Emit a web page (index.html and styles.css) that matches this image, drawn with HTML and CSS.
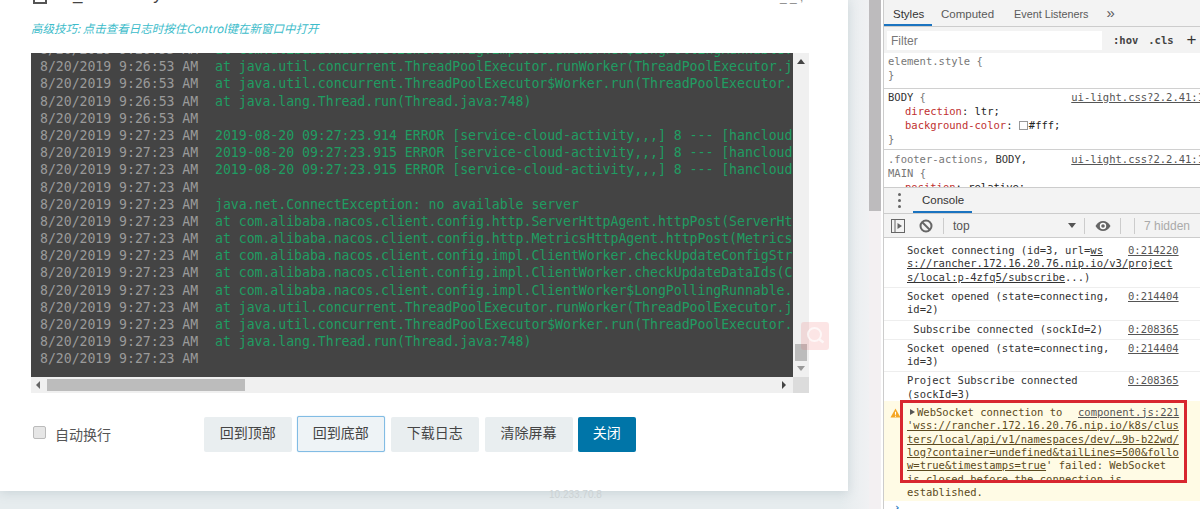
FILE: index.html
```html
<!DOCTYPE html>
<html lang="zh">
<head>
<meta charset="utf-8">
<title>Logs</title>
<link rel="stylesheet" href="styles.css">
</head>
<body>
<main class="app">
  <section class="modal">
    <div class="modal-title"><span class="title-box"></span><span class="title-text">W_               y</span><span class="title-right">_ _ ,</span></div>
    <p class="hint">高级技巧: 点击查看日志时按住Control键在新窗口中打开</p>
    <div class="log-frame">
      <div class="log-row">
        <div class="log-view">
          <div class="log-lines">
            <div class="line"><span class="ts">8/20/2019 9:26:53 AM</span><span class="msg">at com.alibaba.nacos.client.config.impl.ClientWorker$LongPollingRunnable.run(ClientWorker.java:412)</span></div>
            <div class="line"><span class="ts">8/20/2019 9:26:53 AM</span><span class="msg">at java.util.concurrent.ThreadPoolExecutor.runWorker(ThreadPoolExecutor.java:1149)</span></div>
            <div class="line"><span class="ts">8/20/2019 9:26:53 AM</span><span class="msg">at java.util.concurrent.ThreadPoolExecutor$Worker.run(ThreadPoolExecutor.java:624)</span></div>
            <div class="line"><span class="ts">8/20/2019 9:26:53 AM</span><span class="msg">at java.lang.Thread.run(Thread.java:748)</span></div>
            <div class="line"><span class="ts">8/20/2019 9:26:53 AM</span></div>
            <div class="line"><span class="ts">8/20/2019 9:27:23 AM</span><span class="msg">2019-08-20 09:27:23.914 ERROR [service-cloud-activity,,,] 8 --- [hancloud.nacos]</span></div>
            <div class="line"><span class="ts">8/20/2019 9:27:23 AM</span><span class="msg">2019-08-20 09:27:23.915 ERROR [service-cloud-activity,,,] 8 --- [hancloud.nacos]</span></div>
            <div class="line"><span class="ts">8/20/2019 9:27:23 AM</span><span class="msg">2019-08-20 09:27:23.915 ERROR [service-cloud-activity,,,] 8 --- [hancloud.nacos]</span></div>
            <div class="line"><span class="ts">8/20/2019 9:27:23 AM</span></div>
            <div class="line"><span class="ts">8/20/2019 9:27:23 AM</span><span class="msg">java.net.ConnectException: no available server</span></div>
            <div class="line"><span class="ts">8/20/2019 9:27:23 AM</span><span class="msg">at com.alibaba.nacos.client.config.http.ServerHttpAgent.httpPost(ServerHttpAgent.java:1)</span></div>
            <div class="line"><span class="ts">8/20/2019 9:27:23 AM</span><span class="msg">at com.alibaba.nacos.client.config.http.MetricsHttpAgent.httpPost(MetricsHttpAgent.java:1)</span></div>
            <div class="line"><span class="ts">8/20/2019 9:27:23 AM</span><span class="msg">at com.alibaba.nacos.client.config.impl.ClientWorker.checkUpdateConfigStr(ClientWorker)</span></div>
            <div class="line"><span class="ts">8/20/2019 9:27:23 AM</span><span class="msg">at com.alibaba.nacos.client.config.impl.ClientWorker.checkUpdateDataIds(ClientWorker)</span></div>
            <div class="line"><span class="ts">8/20/2019 9:27:23 AM</span><span class="msg">at com.alibaba.nacos.client.config.impl.ClientWorker$LongPollingRunnable.run(Client)</span></div>
            <div class="line"><span class="ts">8/20/2019 9:27:23 AM</span><span class="msg">at java.util.concurrent.ThreadPoolExecutor.runWorker(ThreadPoolExecutor.java:1149)</span></div>
            <div class="line"><span class="ts">8/20/2019 9:27:23 AM</span><span class="msg">at java.util.concurrent.ThreadPoolExecutor$Worker.run(ThreadPoolExecutor.java:624)</span></div>
            <div class="line"><span class="ts">8/20/2019 9:27:23 AM</span><span class="msg">at java.lang.Thread.run(Thread.java:748)</span></div>
            <div class="line"><span class="ts">8/20/2019 9:27:23 AM</span></div>
          </div>
        </div>
        <div class="vbar">
          <span class="arrow up"></span>
          <span class="vthumb"></span>
          <span class="arrow down"></span>
        </div>
      </div>
      <div class="hbar">
        <span class="arrow left"></span>
        <div class="htrack"><span class="hthumb"></span></div>
        <span class="arrow right"></span>
        <span class="corner"></span>
      </div>
    </div>
    <div class="actions">
      <label class="wrap"><span class="check"></span>自动换行</label>
      <div class="buttons">
        <button class="btn b-top">回到顶部</button>
        <button class="btn b-bottom">回到底部</button>
        <button class="btn b-down">下载日志</button>
        <button class="btn b-clear">清除屏幕</button>
        <button class="btn primary">关闭</button>
      </div>
    </div>
  </section>
  <div class="float-search">
    <svg viewBox="0 0 28 28" width="28" height="28"><circle cx="13.500" cy="12.500" r="6.500" fill="none" stroke="#fff" stroke-opacity=".7" stroke-width="2"/><path d="M18.500 17.500l4 3" stroke="#fff" stroke-opacity=".7" stroke-width="2.500" fill="none"/></svg>
  </div>
  <div class="footnote">10.233.70.8</div>
</main>
<div class="page-scroll"><span class="page-scroll-thumb"></span></div>
<aside class="devtools">
  <div class="tabs">
    <span class="tab active">Styles</span><span class="tab computed">Computed</span><span class="tab listeners">Event Listeners</span><span class="tab more">»</span>
  </div>
  <div class="filter">
    <span class="filter-input">Filter</span>
    <span class="filter-btn">:hov</span><span class="filter-btn">.cls</span><span class="filter-plus">+</span>
  </div>
  <div class="rules">
    <div class="rule first">
      <div class="dim">element.style {</div>
      <div class="dim">}</div>
    </div>
    <div class="rule">
      <div class="sel"><span>BODY <i class="dim">{</i></span><a class="src">ui-light.css?2.2.41:1</a></div>
      <div class="decl"><b>direction</b>: ltr;</div>
      <div class="decl"><b>background-color</b>: <span class="swatch"></span>#fff;</div>
      <div class="dim">}</div>
    </div>
    <div class="rule last">
      <div class="sel"><span><i class="dim">.footer-actions,</i> BODY,<br><i class="dim">MAIN</i> <i class="dim">{</i></span><a class="src">ui-light.css?2.2.41:1</a></div>
      <div class="decl"><b>position</b>: relative;</div>
    </div>
  </div>
  <div class="drawer-tabs">
    <span class="dots"><i></i><i></i><i></i></span>
    <span class="console-tab">Console</span>
  </div>
  <div class="console-bar">
    <svg class="ic-panel" viewBox="0 0 16 16" width="16" height="16"><rect x="1.500" y="1.500" width="13" height="13" fill="none" stroke="#666"/><path d="M5 2v12" stroke="#666"/><path d="M7.500 5l4.500 3-4.500 3z" fill="#666"/></svg>
    <svg class="ic-clear" viewBox="0 0 16 16" width="16" height="16"><circle cx="8" cy="8" r="5.500" fill="none" stroke="#666" stroke-width="2"/><path d="M4 4l8 8" stroke="#666" stroke-width="2"/></svg>
    <span class="sep s1"></span>
    <span class="ctx">top</span>
    <span class="caret"></span>
    <span class="sep s2"></span>
    <svg class="eye" viewBox="0 0 16 12" width="16" height="12"><path d="M.5 6c2-3.500 4.500-5 7.500-5s5.500 1.500 7.500 5c-2 3.500-4.500 5-7.500 5s-5.500-1.500-7.500-5z" fill="#666"/><circle cx="8" cy="6" r="3.200" fill="#fff"/><circle cx="8" cy="6" r="1.800" fill="#666"/></svg>
    <span class="sep s3"></span>
    <span class="sep s4"></span>
    <span class="hidden-count">7 hidden</span>
  </div>
  <div class="console">
    <div class="msg-row"><span class="src-link">0:214220</span>Socket connecting (id=3, url=<u>ws</u><br><u>s://rancher.172.16.20.76.nip.io/v3/project</u><br><u>s/local:p-4zfq5/subscribe</u>...)</div>
    <div class="msg-row"><span class="src-link">0:214404</span>Socket opened (state=connecting,<br>id=2)</div>
    <div class="msg-row"><span class="src-link">0:208365</span>&nbsp;Subscribe connected (sockId=2)</div>
    <div class="msg-row"><span class="src-link">0:214404</span>Socket opened (state=connecting,<br>id=3)</div>
    <div class="msg-row tight"><span class="src-link">0:208365</span>Project Subscribe connected<br>(sockId=3)</div>
    <div class="warn-row">
      <svg class="warn-icon" viewBox="0 0 12 11" width="11" height="10"><path d="M6 .5l5.500 10H.5z" fill="#f5a623"/><path d="M6 4v3.500M6 8.500v1" stroke="#fff" stroke-width="1.200"/></svg>
      <span class="warn-src">component.js:221</span><span class="tri"></span>WebSocket connection to<br>
      <u>'wss://rancher.172.16.20.76.nip.io/k8s/clus</u><br>
      <u>ters/local/api/v1/namespaces/dev/…9b-b22wd/</u><br>
      <u>log?container=undefined&amp;tailLines=500&amp;follo</u><br>
      <u>w=true&amp;timestamps=true</u>' failed: WebSocket<br>
      is closed before the connection is<br>
      established.
      <span class="highlight"></span>
    </div>
    <div class="prompt">›</div>
  </div>
</aside>
</body>
</html>
```
FILE: styles.css
```css
* { box-sizing: border-box; }
html, body { margin: 0; height: 100%; overflow: hidden; }
body { display: flex; width: 1200px; height: 509px; background: #fff; font-family: "Liberation Sans", "Noto Sans CJK SC", sans-serif; }
.app { position: relative; width: 869px; height: 509px; background: linear-gradient(90deg, #e6ecee 0, #e6ecee 840px, #f0f1f3 869px); overflow: hidden; flex: none; }
.modal { width: 848px; height: 491px; background: #fff; padding: 0 0 0 31px; box-shadow: 0 2px 10px rgba(120,140,150,.25); overflow: hidden; }
.modal-title { height: 4px; display: flex; align-items: flex-end; position: relative; font-size: 17px; color: #444; }
.title-box { width: 14px; height: 11px; border: 2px solid #555; margin-left: 2px; flex: none; }
.title-text { position: absolute; left: 26px; bottom: 2px; line-height: 14px; white-space: pre; }
.title-right { position: absolute; left: 749px; bottom: 2px; line-height: 10px; font-size: 12px; color: #888; }
.hint { margin: 17px 0 0; height: 14px; line-height: 14px; font-size: 11.500px; font-style: italic; color: #3cbcca; font-family: "Noto Sans CJK SC", "Liberation Sans", sans-serif; }
.log-frame { margin-top: 18px; width: 778px; height: 340px; background: #f0f0f0; }
.log-row { display: flex; height: 324px; }
.log-view { width: 762px; height: 324px; background: #444444; overflow: hidden; }
.log-lines { margin-top: -12px; padding-left: 9px; }
.line { height: 17.200px; line-height: 17.200px; font-family: "DejaVu Sans Mono", monospace; font-size: 13.200px; white-space: pre; display: flex; }
.ts { color: #9a9a9a; width: 175px; flex: none; letter-spacing: -.03px; }
.msg { color: #1f9d62; letter-spacing: -.03px; }
.vbar { width: 16px; position: relative; background: #f0f0f0; }
.arrow { position: absolute; width: 0; height: 0; border: 4px solid transparent; }
.arrow.up { border-top: 0; border-bottom: 5px solid #444; left: 4px; top: 6px; }
.arrow.down { border-bottom: 0; border-top: 5px solid #999; left: 4px; top: 313px; }
.vthumb { position: absolute; left: 2px; top: 291px; width: 12px; height: 17px; background: #bcbcbc; }
.hbar { display: flex; height: 16px; position: relative; background: #f0f0f0; }
.arrow.left { border-left: 0; border-right: 4px solid #666; left: 5px; top: 4px; }
.htrack { margin-left: 16px; width: 730px; padding-top: 2px; }
.hthumb { display: block; width: 198px; height: 12px; background: #bcbcbc; }
.arrow.right { position: static; border-right: 0; border-left: 4px solid #444; align-self: center; margin-left: 5px; margin-right: 7px; }
.corner { width: 16px; height: 16px; background: #dcdcdc; margin-left: auto; }
.actions { display: flex; margin-top: 23px; height: 36px; align-items: center; }
.wrap { display: flex; align-items: center; font-size: 14px; color: #555; width: 173px; padding-left: 2px; height: 36px; padding-bottom: 1px; flex: none; }
.check { width: 13px; height: 13px; border: 1px solid #bbb; background: #e6e6e6; border-radius: 2px; margin-right: 9px; margin-top: -3px; }
.buttons { display: flex; align-items: center; }
.btn { height: 35px; border: 0; background: #e9eef0; color: #444; font-size: 14px; font-family: "Noto Sans CJK SC", sans-serif; border-radius: 2px; padding: 0 0 4px; flex: none; }
.b-top { width: 87.500px; }
.b-bottom { width: 88.500px; height: 36px; margin-left: 5px; border: 1px solid #82bce4; box-shadow: 0 0 1px #82bce4; background: #eef3f6; }
.b-down { width: 87.500px; margin-left: 6px; }
.b-clear { width: 88px; margin-left: 6px; }
.primary { background: #0075a8; color: #fff; width: 58.500px; margin-left: 5px; }
.float-search { position: absolute; left: 801px; top: 322px; width: 28px; height: 28px; background: rgba(240,100,100,.17); border-radius: 3px; }
.float-search svg { display: block; }
.footnote { position: absolute; left: 549px; top: 489px; font-size: 10px; color: #ccd2d4; }
.page-scroll { width: 12px; height: 509px; background: #f3f0f2; flex: none; position: relative; }
.page-scroll-thumb { position: absolute; left: 0; top: 0; width: 12px; height: 211px; background: #bdbbbd; }
.devtools { margin-left: 2px; height: 509px; background: #fff; border-left: 1px solid #ccc; font-family: "DejaVu Sans Mono", monospace; font-size: 10.500px; color: #333; display: flex; flex-direction: column; overflow: hidden; flex: 1; min-width: 0; }
.tabs { height: 27px; background: #f3f3f3; border-bottom: 1px solid #ccc; display: flex; font-family: "Liberation Sans", sans-serif; font-size: 11.500px; color: #5a5a5a; align-items: flex-start; flex: none; }
.tab { padding: 8px 9px 0; height: 26px; white-space: nowrap; }
.tab.active { color: #333; border-bottom: 2px solid #1a73c0; width: 48px; }
.tab.computed { margin-right: 2px; }
.tab.listeners { font-size: 10.800px; }
.tab.more { font-size: 15px; padding-top: 4px; }
.filter { height: 26px; background: #f3f3f3; display: flex; align-items: center; padding-left: 3px; color: #333; flex: none; }
.filter-input { width: 215px; height: 19px; background: #fff; font-family: "Liberation Sans", sans-serif; font-size: 12px; color: #777; padding: 3px 4px; margin-right: 11px; }
.filter-btn { margin-right: 10px; font-weight: bold; font-size: 10.500px; color: #444; }
.filter-plus { font-size: 17px; margin-left: 3px; font-family: "Liberation Sans", sans-serif; }
.rules { height: 134px; line-height: 14px; overflow: hidden; flex: none; }
.rule { padding: 1px 0 3px 4px; border-bottom: 1px solid #d0d0d0; }
.rule.first { padding-bottom: 6px; }
.rule.last { border: 0; padding-top: 2px; }
.dim { color: #777; font-style: normal; }
.sel { display: flex; justify-content: space-between; white-space: nowrap; color: #333; }
.src { color: #555; text-decoration: underline; margin-right: -4px; white-space: nowrap; }
.decl { padding-left: 17px; color: #222; }
.decl b { color: #c03030; font-weight: normal; }
.swatch { display: inline-block; width: 9px; height: 9px; border: 1px solid #999; background: #fff; margin-right: 1px; vertical-align: -1px; }
.drawer-tabs { height: 27px; background: #f3f3f3; border-top: 1px solid #ccc; border-bottom: 1px solid #ccc; display: flex; align-items: center; font-family: "Liberation Sans", sans-serif; font-size: 11.500px; flex: none; }
.dots { width: 3px; margin: 0 12px 0 14px; display: flex; flex-direction: column; gap: 3px; flex: none; }
.dots i { display: block; width: 3px; height: 3px; background: #666; border-radius: 50%; }
.console-tab { height: 25px; width: 59px; padding: 6px 0 0 9px; border-bottom: 2px solid #1a73c0; color: #333; }
.console-bar { height: 24px; background: #f3f3f3; border-bottom: 1px solid #ccc; display: flex; align-items: center; padding-left: 6px; font-family: "Liberation Sans", sans-serif; font-size: 12px; color: #555; flex: none; }
.console-bar svg { flex: none; }
.ic-panel { margin-right: 12px; }
.ic-clear { margin-right: 9px; }
.sep { width: 1px; height: 16px; background: #ccc; flex: none; }
.s1 { margin-right: 9px; }
.s2 { margin-right: 10px; }
.s3 { margin-right: 13px; }
.s4 { margin-right: 9px; }
.ctx { width: 115px; flex: none; }
.caret { width: 0; height: 0; border: 4px solid transparent; border-bottom: 0; border-top: 5px solid #555; margin-right: 8px; flex: none; }
.eye { margin-right: 9px; }
.hidden-count { color: #aaa; white-space: nowrap; }
.console { flex: 1; min-height: 0; line-height: 13.400px; background: #fff; padding-top: 4px; overflow: hidden; }
.msg-row { padding: 2px 0 2.800px 23px; border-bottom: 1px solid #eee; white-space: nowrap; position: relative; }
.msg-row.tight { border: 0; padding-bottom: 0; }
.src-link { position: absolute; left: 244px; text-decoration: underline; color: #555; }
.warn-row { background: #fffbe5; color: #5c4a20; padding: 4.500px 0 0 23px; position: relative; white-space: nowrap; height: 100px; }
.warn-icon { position: absolute; left: 6px; top: 7px; }
.warn-src { position: absolute; left: 194px; top: 4.500px; text-decoration: underline; color: #555; }
.tri { display: inline-block; width: 0; height: 0; border: 3px solid transparent; border-right: 0; border-left: 5px solid #555; margin: 0 2px 1px 3px; }
.highlight { position: absolute; left: 16px; top: -1px; width: 287px; height: 83px; border: 3px solid #d8262f; }
.prompt { color: #1a73c0; padding-left: 10px; font-weight: bold; }
```
